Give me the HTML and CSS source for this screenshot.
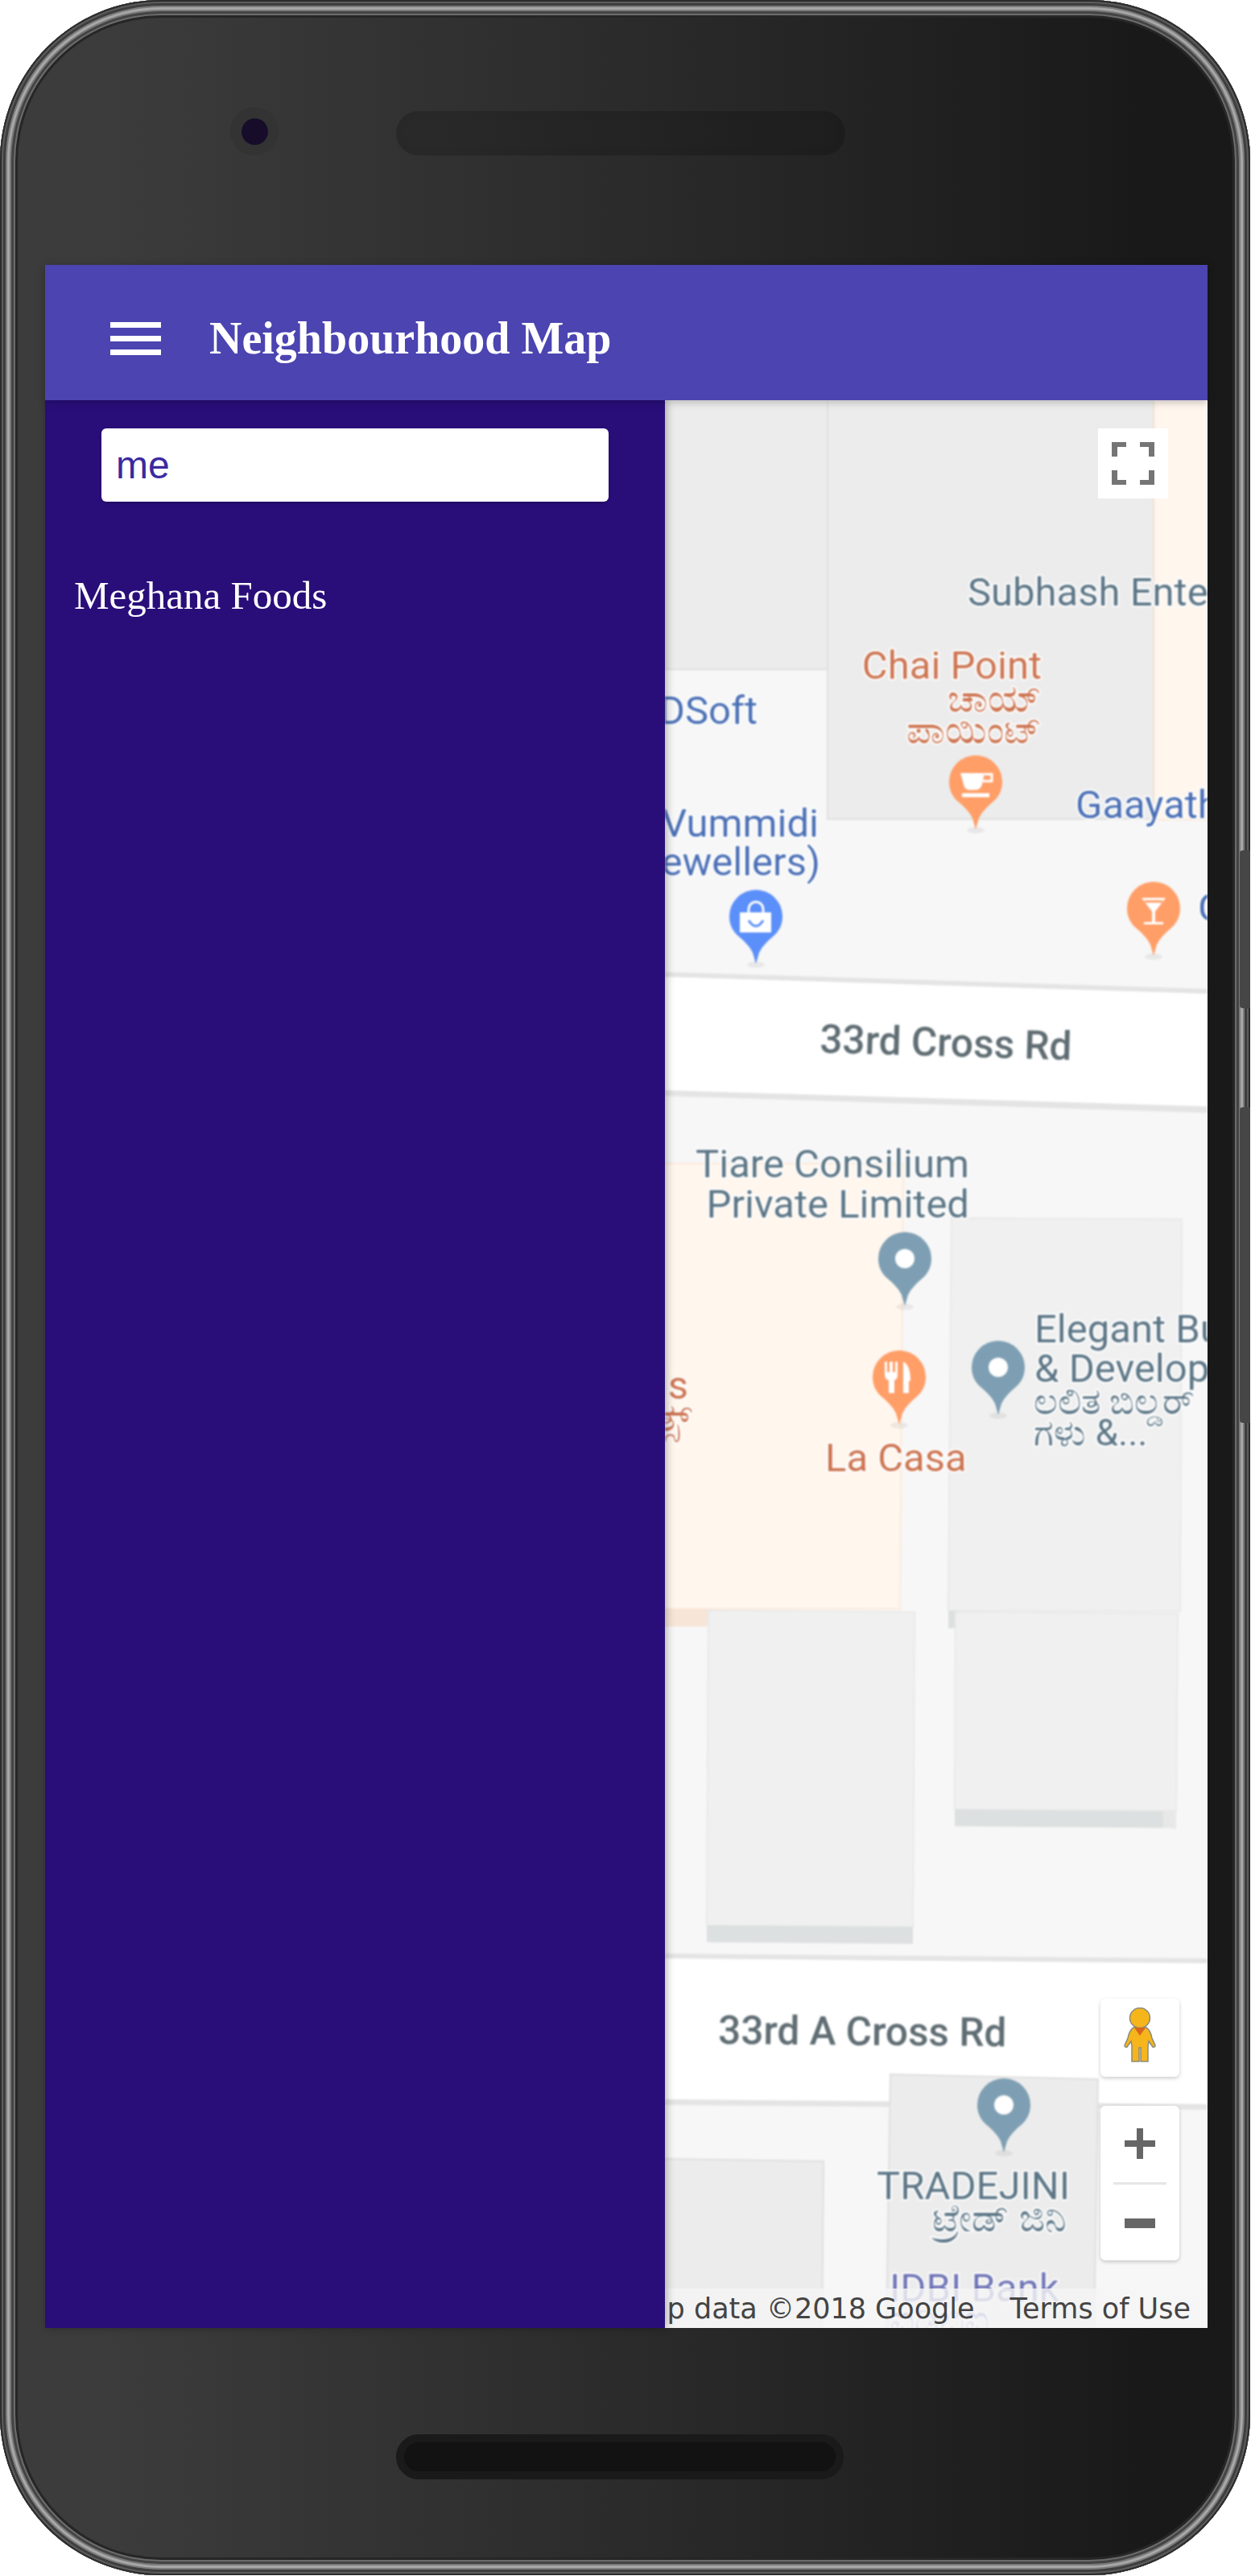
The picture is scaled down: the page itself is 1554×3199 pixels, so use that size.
FILE: index.html
```html
<!DOCTYPE html>
<html lang="en">
<head>
    <meta charset="UTF-8" />
    <meta name="viewport" content="width=device-width, initial-scale=1.0" />
    <title>Neighbourhood Map</title>
    <link rel="stylesheet" href="styles.css">
</head>
<body>
<div class="phone">
    <div class="side-btn side-btn-power"></div>
    <div class="side-btn side-btn-volume"></div>

    <div class="phone-top">
        <div class="camera"><div class="camera-lens"></div></div>
        <div class="speaker"></div>
    </div>

    <div class="screen">
        <header class="app-bar">
            <div class="burger"><span></span><span></span><span></span></div>
            <h1 class="app-title">Neighbourhood Map</h1>
        </header>

        <div class="app-body">
            <aside class="drawer">
                <input class="search" type="text" value="me" />
                <ul class="places">
                    <li>Meghana Foods</li>
                </ul>
            </aside>

            <main class="map">
                <svg class="tiles" viewBox="826 497 674 2394">
                    <defs>
                        <path id="pin" d="M0 59L-4 45C-8 37-14 31-20 26C-29 19-33 10-33 0A33 33 0 0 1 33 0C33 10 29 19 20 26C14 31 8 37 4 45Z" />
                        <g id="pin-dot">
                            <ellipse class="pin-shadow" cx="0" cy="60" rx="11" ry="4" />
                            <use href="#pin" class="pin-slate" />
                            <circle r="12" fill="#fff" />
                        </g>
                    </defs>

                    <!-- blocks, top -->
                    <rect class="block" x="826" y="490" width="202" height="341" />
                    <rect class="block" x="1028" y="490" width="405" height="527" />
                    <rect class="peach" x="1434" y="490" width="70" height="528" />

                    <!-- 33rd Cross Rd -->
                    <polygon class="road-edge" points="826,1207 1500,1228 1500,1382 826,1361" />
                    <polygon class="road" points="826,1213 1500,1234 1500,1374 826,1354" />

                    <!-- blocks, middle -->
                    <polygon class="peach" points="820,1445 1122,1445 1118,1998 820,1998" />
                    <rect class="peach-strip" x="820" y="1998" width="63" height="22" />
                    <polygon class="block-light" points="1182,1513 1468,1514 1466,2001 1178,2000" />
                    <rect class="strip" x="1178" y="2000" width="11" height="22" />
                    <polygon class="block-light" points="880,2000 1136,2002 1134,2393 878,2391" />
                    <polygon class="strip" points="878,2391 1134,2393 1134,2414 878,2412" />
                    <polygon class="block-light" points="1187,2002 1463,2004 1461,2249 1186,2247" />
                    <polygon class="strip" points="1186,2247 1445,2249 1445,2270 1186,2268" />
                    <polygon class="strip-end" points="1445,2249 1461,2249 1461,2271 1445,2270" />

                    <!-- 33rd A Cross Rd -->
                    <polygon class="road-edge" points="826,2426 1500,2432 1500,2620 826,2614" />
                    <polygon class="road" points="826,2432 1500,2438 1500,2613 826,2607" />

                    <!-- blocks, bottom -->
                    <polygon class="block" points="820,2681 1023,2684 1021,2900 820,2900" />
                    <polygon class="block" points="1106,2576 1364,2582 1359,2900 1101,2900" />

                    <!-- road names -->
                    <text class="lbl-road" transform="translate(1018 1307) rotate(1.7)">33rd Cross Rd</text>
                    <text class="lbl-road" transform="translate(892 2538) rotate(.5)">33rd A Cross Rd</text>

                    <!-- labels -->
                    <text class="lbl lbl-slate" x="1202" y="752">Subhash Enterprises</text>
                    <text class="lbl lbl-orange lbl-end" x="1294" y="843">Chai Point</text>
                    <text class="lbl-kn lbl-orange lbl-end" x="1294" y="884">ಚಾಯ್</text>
                    <text class="lbl-kn lbl-orange lbl-end" x="1294" y="923">ಪಾಯಿಂಟ್</text>
                    <text class="lbl lbl-blue lbl-end" x="941" y="899">DSoft</text>
                    <text class="lbl lbl-blue" x="1336" y="1016">Gaayathri</text>
                    <text class="lbl lbl-blue lbl-end" x="1017" y="1039">Vummidi</text>
                    <text class="lbl lbl-blue lbl-end" x="1019" y="1087">ewellers)</text>
                    <text class="lbl lbl-blue" x="1488" y="1144">G</text>
                    <text class="lbl lbl-slate lbl-end" x="1204" y="1462">Tiare Consilium</text>
                    <text class="lbl lbl-slate lbl-end" x="1204" y="1512">Private Limited</text>
                    <text class="lbl lbl-orange lbl-end" x="855" y="1737">ds</text>
                    <text class="lbl-kn lbl-orange lbl-end" x="860" y="1777">ತ್ಸ್</text>
                    <text class="lbl lbl-orange" x="1025" y="1827">La Casa</text>
                    <text class="lbl lbl-slate" x="1285" y="1667">Elegant Builders</text>
                    <text class="lbl lbl-slate" x="1285" y="1716">&amp; Developers</text>
                    <text class="lbl-kn lbl-kn-small lbl-slate" x="1284" y="1756">ಲಲಿತ ಬಿಲ್ಡರ್</text>
                    <text class="lbl-kn lbl-kn-small lbl-slate" x="1284" y="1795">ಗಳು &amp;...</text>
                    <text class="lbl lbl-slate" x="1089" y="2731">TRADEJINI</text>
                    <text class="lbl-kn lbl-slate lbl-end" x="1325" y="2771">ಟ್ರೇಡ್ ಜಿನಿ</text>
                    <text class="lbl lbl-idbi" x="1105" y="2858">IDBI Bank</text>
                    <text class="lbl-kn lbl-idbi" x="1105" y="2897">ಐಡಿಬಿಐ</text>

                    <!-- pins -->
                    <g transform="translate(1212 971)">
                        <ellipse class="pin-shadow" cx="0" cy="60" rx="11" ry="4" />
                        <use href="#pin" class="pin-orange" />
                        <path fill="#fff" d="M-19-11H11L8 3Q6 10 0 10H-8Q-14 10-15 3Z" />
                        <path fill="none" stroke="#fff" stroke-width="3" d="M11-9.500H20V-1H9" />
                        <rect x="-17" y="14" width="34" height="5" fill="#fff" />
                    </g>
                    <g transform="translate(1433 1128)">
                        <ellipse class="pin-shadow" cx="0" cy="60" rx="11" ry="4" />
                        <use href="#pin" class="pin-orange" />
                        <path fill="#fff" d="M-15-13H15L2 4V17H12V20H-12V17H-2V4Z" />
                        <rect x="-11" y="-10" width="22" height="3" fill="#ff9e67" />
                    </g>
                    <g transform="translate(939 1138)">
                        <ellipse class="pin-shadow" cx="0" cy="60" rx="11" ry="4" />
                        <use href="#pin" class="pin-blue" />
                        <path fill="none" stroke="#fff" stroke-width="3" d="M-9-4V-9A9 9 0 0 1 9-9V-4" />
                        <rect x="-20" y="-5" width="39" height="25" fill="#fff" />
                        <path fill="none" stroke="#5b8ff9" stroke-width="3" d="M-9 5Q0 19 9 5" />
                    </g>
                    <g transform="translate(1117 1710)">
                        <ellipse class="pin-shadow" cx="0" cy="60" rx="11" ry="4" />
                        <use href="#pin" class="pin-orange" />
                        <path fill="#fff" d="M-18-19H-15V-6H-12V-19H-8V-6H-5V-19H-2V-3Q-2 3-6 4V20H-13V4Q-18 3-18-3Z" />
                        <path fill="#fff" d="M5-19Q14-15 14 5H12V20H5Z" />
                    </g>
                    <use href="#pin-dot" transform="translate(1124 1563)" />
                    <use href="#pin-dot" transform="translate(1240 1698)" />
                    <use href="#pin-dot" transform="translate(1247 2614)" />
                </svg>

                <button class="map-btn fullscreen">
                    <svg class="fullscreen-icon" viewBox="0 0 53 53">
                        <path d="M0 0H18V6H7V18H0Z" />
                        <path d="M53 0H35V6H46V18H53Z" />
                        <path d="M0 53H18V47H7V35H0Z" />
                        <path d="M53 53H35V47H46V35H53Z" />
                    </svg>
                </button>

                <div class="map-controls">
                    <button class="map-btn pegman">
                        <svg class="pegman-icon" viewBox="0 0 40 68">
                            <path class="peg" d="M12 25Q20 22 28 25Q33 28 35 38L39 47Q39 50 36 49L31 42L30 48V67H21V50H19V67H10V48L9 42L4 49Q1 50 1 47L5 38Q7 28 12 25Z" />
                            <circle class="peg" cx="20" cy="13" r="12.500" />
                            <path fill="#d9661f" d="M13 25H27L20 35Z" />
                        </svg>
                    </button>
                    <div class="map-btn zoom">
                        <svg class="zoom-icon" viewBox="0 0 38 38">
                            <path d="M15 0H23V15H38V23H23V38H15V23H0V15H15Z" />
                        </svg>
                        <div class="zoom-line"></div>
                        <svg class="zoom-icon" viewBox="0 0 38 38">
                            <rect y="13" width="38" height="12" />
                        </svg>
                    </div>
                </div>

                <div class="attribution">
                    <span>Map data ©2018 Google</span>
                    <span>Terms of Use</span>
                </div>
            </main>
        </div>
    </div>

    <div class="phone-bottom">
        <div class="speaker-bottom"></div>
    </div>
</div>
</body>
</html>
```

FILE: styles.css
```css
body {
    margin: 0;
    background-color: #fff;
}
.phone {
    position: relative;
    display: flex;
    flex-direction: column;
    box-sizing: border-box;
    width: 1553px;
    height: 3198px;
    padding: 0 53px 0 56px;
    border-radius: 200px;
    background: linear-gradient(to right, #3c3c3c 8%, #2b2b2b 50%, #191919 92%);
    box-shadow:
        inset 0 0 0 2px #2c2c2c,
        inset 0 0 0 4px #5c5c5c,
        inset 0 0 0 7px #3e3e3e,
        inset 0 0 0 9px #7c7c7c,
        inset 0 0 0 12px #a8a8a8,
        inset 0 0 0 14px #7a7a7a,
        inset 0 0 0 17px #444,
        inset 0 0 0 19px #6c6c6c,
        inset 0 0 0 22px #262626;
}
.side-btn {
    position: absolute;
    right: 0;
    width: 13px;
    background-color: #464646;
    border-radius: 4px 0 0 4px;
}
.side-btn-power {
    top: 1056px;
    height: 196px;
}
.side-btn-volume {
    top: 1375px;
    height: 392px;
}
.phone-top {
    display: flex;
    gap: 146px;
    box-sizing: border-box;
    height: 329px;
    padding: 133px 0 0 230px;
}
.camera {
    display: flex;
    align-items: center;
    justify-content: center;
    width: 60px;
    height: 60px;
    border-radius: 50%;
    background-color: #333;
}
.camera-lens {
    width: 33px;
    height: 33px;
    border-radius: 50%;
    background-color: #170d2a;
}
.speaker {
    box-sizing: border-box;
    width: 558px;
    height: 55px;
    margin-top: 5px;
    border-radius: 28px;
    border: 10px solid rgba(0, 0, 0, 0.03);
    background-color: rgba(0, 0, 0, 0.16);
}
.screen {
    display: flex;
    flex-direction: column;
    height: 2562px;
}
.app-bar {
    position: relative;
    z-index: 2;
    display: flex;
    align-items: center;
    gap: 60px;
    flex: none;
    box-sizing: border-box;
    height: 168px;
    padding: 14px 0 0 81px;
    background-color: #4b44b1;
    box-shadow: 0 2px 10px rgba(0, 0, 0, 0.25);
}
.burger {
    display: flex;
    flex-direction: column;
    gap: 10px;
    width: 63px;
}
.burger span {
    height: 7px;
    background-color: #fff;
}
.app-title {
    margin: 0;
    font-family: "Liberation Serif", serif;
    font-size: 56px;
    font-weight: bold;
    color: #fff;
}
.app-body {
    display: flex;
    flex: 1;
    min-height: 0;
}
.drawer {
    position: relative;
    z-index: 1;
    flex: none;
    width: 770px;
    padding-top: 35px;
    background-color: #290e7a;
    box-shadow: 2px 0 10px rgba(0, 0, 0, 0.3);
}
.search {
    display: block;
    box-sizing: border-box;
    width: 630px;
    height: 91px;
    margin-left: 70px;
    padding: 0 18px;
    border: none;
    border-radius: 6px;
    font-family: "Liberation Sans", Arial, sans-serif;
    font-size: 48px;
    color: #3a2a9f;
    box-shadow: 0 2px 3px rgba(0, 0, 0, 0.2);
}
.places {
    margin: 88px 0 0 36px;
    padding: 0;
    list-style: none;
    font-family: "Liberation Serif", serif;
    font-size: 49px;
    color: #fff;
}
.map {
    position: relative;
    flex: 1;
    overflow: hidden;
    background-color: #f7f7f7;
}
.tiles {
    display: block;
    width: 100%;
    height: 100%;
    filter: blur(0.8px);
}
.block {
    fill: #ececec;
    stroke: #dfdfdf;
    stroke-width: 2;
}
.block-light {
    fill: #f0f0f0;
    stroke: #e9e9e9;
    stroke-width: 2;
}
.peach {
    fill: #fff6ee;
    stroke: #fbeadb;
    stroke-width: 2;
}
.peach-strip {
    fill: #f7e6d8;
}
.strip {
    fill: #dde0e0;
}
.strip-end {
    fill: #e8e8e8;
}
.road {
    fill: #fff;
}
.road-edge {
    fill: #e4e4e4;
}
.lbl, .lbl-kn, .lbl-road {
    font-family: Roboto, "Noto Sans", sans-serif;
    paint-order: stroke;
    stroke: #fff;
    stroke-width: 4px;
    stroke-linejoin: round;
}
.lbl {
    font-size: 49px;
}
.lbl-kn {
    font-size: 48px;
}
.lbl-kn-small {
    font-size: 46px;
}
.lbl-road {
    font-size: 49.5px;
    font-weight: 500;
    fill: #5f6d73;
}
.lbl-end {
    text-anchor: end;
}
.lbl-slate {
    fill: #5b7585;
}
.lbl-blue {
    fill: #4a6fb5;
}
.lbl-orange {
    fill: #cc7450;
}
.lbl-idbi {
    fill: #6f74b5;
}
.pin-shadow {
    fill: rgba(0, 0, 0, 0.06);
}
.pin-orange {
    fill: #ff9e67;
}
.pin-blue {
    fill: #5b8ff9;
}
.pin-slate {
    fill: #7e9fb3;
}
.map-btn {
    display: block;
    padding: 0;
    border: none;
    background-color: #fff;
}
.fullscreen {
    position: absolute;
    top: 35px;
    right: 49px;
    width: 87px;
    height: 87px;
    display: flex;
    align-items: center;
    justify-content: center;
}
.fullscreen-icon {
    width: 53px;
    height: 53px;
    fill: #757575;
}
.map-controls {
    position: absolute;
    right: 35px;
    bottom: 84px;
    display: flex;
    flex-direction: column;
    gap: 36px;
    width: 98px;
}
.pegman, .zoom {
    width: 100%;
    border-radius: 6px;
    box-shadow: 0 2px 5px rgba(0, 0, 0, 0.2);
}
.pegman {
    display: flex;
    justify-content: center;
    height: 97px;
    padding-top: 11px;
    box-sizing: border-box;
}
.pegman-icon {
    width: 40px;
    height: 68px;
}
.peg {
    fill: #f5b51b;
    stroke: #8b8b7f;
    stroke-width: 1.5;
}
.zoom {
    display: flex;
    flex-direction: column;
    align-items: center;
    box-sizing: border-box;
    height: 192px;
    padding-top: 28px;
}
.zoom-icon {
    width: 38px;
    height: 38px;
    fill: #666;
}
.zoom-line {
    width: 66px;
    height: 3px;
    margin: 29px 0;
    background-color: #e6e6e6;
}
.attribution {
    position: absolute;
    left: 0;
    right: 0;
    bottom: 0;
    display: flex;
    justify-content: flex-end;
    align-items: center;
    gap: 44px;
    height: 49px;
    padding-right: 21px;
    font-family: "DejaVu Sans", sans-serif;
    font-size: 35px;
    white-space: nowrap;
    color: #444;
    background-color: rgba(245, 245, 245, 0.8);
}
.phone-bottom {
    display: flex;
    justify-content: center;
    padding-top: 132px;
    padding-right: 16px;
}
.speaker-bottom {
    box-sizing: border-box;
    width: 556px;
    height: 56px;
    border: 10px solid #1a1a1a;
    border-radius: 28px / 28px;
    background-color: #121212;
}
```
